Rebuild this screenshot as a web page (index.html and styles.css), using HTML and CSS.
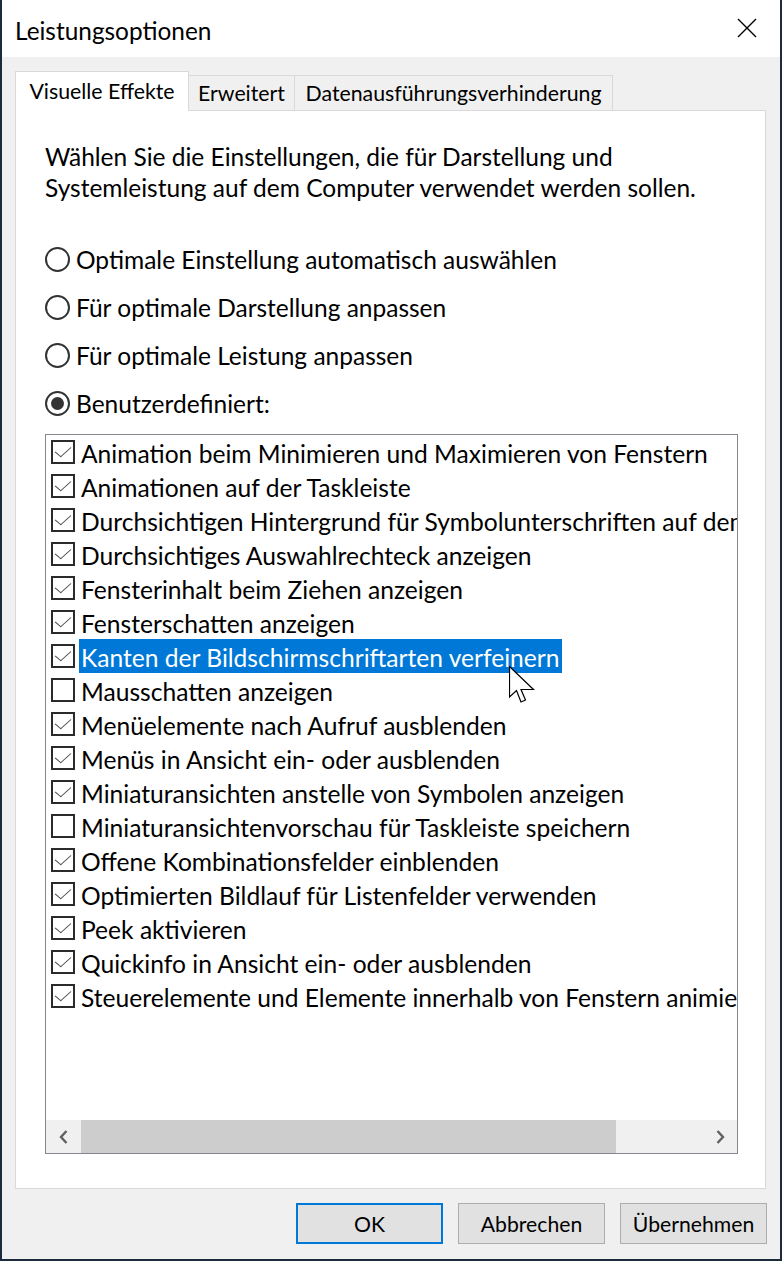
FILE: index.html
```html
<!DOCTYPE html>
<html lang="de">
<head>
  <meta charset="UTF-8" />
  <title>Leistungsoptionen</title>
  <link rel="stylesheet" href="styles.css">
</head>
<body>
  <div class="window">
    <div class="titlebar">
      <span class="title">Leistungsoptionen</span>
      <svg class="close" width="20" height="20" viewBox="0 0 20 20">
        <path d="M1 1L19 19M19 1L1 19" stroke="#000" stroke-width="1.4" fill="none"/>
      </svg>
    </div>

    <div class="content">
      <div class="tabs">
        <div class="tab tab-visual active">Visuelle Effekte</div>
        <div class="tab tab-advanced">Erweitert</div>
        <div class="tab tab-dep">Datenausführungsverhinderung</div>
      </div>

      <div class="panel">
        <p class="intro">Wählen Sie die Einstellungen, die für Darstellung und<br>Systemleistung auf dem Computer verwendet werden sollen.</p>

        <div class="radios">
          <div class="radio"><span class="circle"></span>Optimale Einstellung automatisch auswählen</div>
          <div class="radio"><span class="circle"></span>Für optimale Darstellung anpassen</div>
          <div class="radio"><span class="circle"></span>Für optimale Leistung anpassen</div>
          <div class="radio checked"><span class="circle"></span>Benutzerdefiniert:</div>
        </div>

        <div class="listbox">
          <div class="items">
            <div class="item"><span class="box on"></span><span class="label">Animation beim Minimieren und Maximieren von Fenstern</span></div>
            <div class="item"><span class="box on"></span><span class="label">Animationen auf der Taskleiste</span></div>
            <div class="item"><span class="box on"></span><span class="label">Durchsichtigen Hintergrund für Symbolunterschriften auf dem Desktop</span></div>
            <div class="item"><span class="box on"></span><span class="label">Durchsichtiges Auswahlrechteck anzeigen</span></div>
            <div class="item"><span class="box on"></span><span class="label">Fensterinhalt beim Ziehen anzeigen</span></div>
            <div class="item"><span class="box on"></span><span class="label">Fensterschatten anzeigen</span></div>
            <div class="item selected"><span class="box on"></span><span class="label">Kanten der Bildschirmschriftarten verfeinern</span></div>
            <div class="item"><span class="box"></span><span class="label">Mausschatten anzeigen</span></div>
            <div class="item"><span class="box on"></span><span class="label">Menüelemente nach Aufruf ausblenden</span></div>
            <div class="item"><span class="box on"></span><span class="label">Menüs in Ansicht ein- oder ausblenden</span></div>
            <div class="item"><span class="box on"></span><span class="label">Miniaturansichten anstelle von Symbolen anzeigen</span></div>
            <div class="item"><span class="box"></span><span class="label">Miniaturansichtenvorschau für Taskleiste speichern</span></div>
            <div class="item"><span class="box on"></span><span class="label">Offene Kombinationsfelder einblenden</span></div>
            <div class="item"><span class="box on"></span><span class="label">Optimierten Bildlauf für Listenfelder verwenden</span></div>
            <div class="item"><span class="box on"></span><span class="label">Peek aktivieren</span></div>
            <div class="item"><span class="box on"></span><span class="label">Quickinfo in Ansicht ein- oder ausblenden</span></div>
            <div class="item"><span class="box on"></span><span class="label">Steuerelemente und Elemente innerhalb von Fenstern animieren</span></div>
          </div>

          <div class="hscroll">
            <span class="arrow">
              <svg width="12" height="16" viewBox="0 0 12 16"><path d="M8.5 2L3 8l5.5 6" stroke="#606060" stroke-width="2.4" fill="none"/></svg>
            </span>
            <span class="track"><span class="thumb"></span></span>
            <span class="arrow">
              <svg width="12" height="16" viewBox="0 0 12 16"><path d="M3.5 2L9 8l-5.5 6" stroke="#606060" stroke-width="2.4" fill="none"/></svg>
            </span>
          </div>
        </div>
      </div>

      <div class="buttons">
        <button class="btn default">OK</button>
        <button class="btn">Abbrechen</button>
        <button class="btn">Übernehmen</button>
      </div>
    </div>

    <!-- Mauszeiger über dem markierten Eintrag -->
    <svg class="cursor" width="26" height="38" viewBox="0 0 26 38">
      <path d="M0.5 0.5L0.5 31L7.5 24.5L12 36L16.5 34L12 23.5L24.5 23.5Z" fill="#fff" stroke="#000" stroke-width="1.2" stroke-linejoin="miter"/>
    </svg>
  </div>
</body>
</html>
```

FILE: styles.css
```css
* {
  box-sizing: border-box;
}

body {
  margin: 0;
  background: #1c2b3c;
  font-family: "Segoe UI", "Lato", "Noto Sans", sans-serif;
  color: #000;
}

.window {
  position: relative;
  margin-left: 2px;
  width: 778px;
  height: 1259px;
  background: #f0f0f0;
  display: flex;
  flex-direction: column;
}

/* Titelleiste */
.titlebar {
  height: 57px;
  background: #fff;
  display: flex;
  align-items: center;
  justify-content: space-between;
  padding: 4px 23px 0 13px;
}

.title {
  font-size: 24.4px;
}

.close {
  margin-top: -6px;
}

.content {
  flex: 1;
  display: flex;
  flex-direction: column;
  padding: 14px 14px 0 13px;
}

/* Reiter */
.tabs {
  display: flex;
  align-items: flex-end;
  height: 40px;
  margin-bottom: -1px;
  position: relative;
  z-index: 1;
}

.tab {
  height: 35px;
  margin-bottom: 1px;
  display: flex;
  align-items: center;
  justify-content: center;
  background: #f0f0f0;
  border: 1px solid #d9d9d9;
  border-bottom: none;
  font-size: 21.3px;
}

.tab + .tab {
  border-left: none;
}

.tab.active {
  height: 40px;
  margin-bottom: 0;
  background: #fff;
  padding-bottom: 1px;
}

.tab-visual { width: 174px; }
.tab-advanced { width: 106px; }
.tab-dep { width: 318px; }

.panel {
  height: 1079px;
  background: #fff;
  border: 1px solid #d9d9d9;
  padding: 30px 0 0 29px;
}

.intro {
  margin: 0;
  font-size: 24.5px;
  line-height: 31px;
}

.radios {
  margin-top: 32px;
}

.radio {
  height: 48px;
  display: flex;
  align-items: center;
  font-size: 24.5px;
}

.circle {
  width: 25px;
  height: 25px;
  border: 2px solid #333;
  border-radius: 50%;
  margin-right: 6px;
  display: flex;
  align-items: center;
  justify-content: center;
  flex-shrink: 0;
}

.radio.checked .circle::after {
  content: "";
  width: 13px;
  height: 13px;
  border-radius: 50%;
  background: #333;
}

/* Liste mit Kontrollkästchen */
.listbox {
  margin-top: 7px;
  width: 693px;
  height: 720px;
  border: 1px solid #828790;
  background: #fff;
  display: flex;
  flex-direction: column;
}

.items {
  flex: 1;
  overflow: hidden;
  white-space: nowrap;
}

.item {
  height: 34px;
  display: flex;
  align-items: center;
  padding-left: 5px;
  font-size: 24.6px;
}

.box {
  width: 24px;
  height: 24px;
  border: 2px solid #2b2b2b;
  margin-right: 4px;
  flex-shrink: 0;
  position: relative;
}

.box.on::after {
  content: "";
  position: absolute;
  left: 6px;
  top: 1px;
  width: 7px;
  height: 13px;
  border-right: 1.7px solid #4a4a4a;
  border-bottom: 1.7px solid #4a4a4a;
  transform: rotate(40deg) skewX(-8deg);
}

.label {
  padding: 3px 2px 0;
  height: 34px;
  line-height: 31px;
}

.item.selected .label {
  background: #0078d7;
  color: #fff;
}

.hscroll {
  height: 33px;
  display: flex;
  background: #f0f0f0;
}

.arrow {
  width: 35px;
  display: flex;
  align-items: center;
  justify-content: center;
}

.track {
  flex: 1;
}

.thumb {
  display: block;
  width: 535px;
  height: 100%;
  background: #cdcdcd;
}

/* Schaltflächen */
.buttons {
  display: flex;
  justify-content: flex-end;
  gap: 15px;
  margin-top: 14px;
  margin-right: -1px;
}

.btn {
  width: 147px;
  height: 41px;
  background: #e1e1e1;
  border: 1px solid #adadad;
  font-family: inherit;
  font-size: 21.2px;
  color: #000;
  padding: 0;
}

.btn.default {
  border: 2px solid #0078d7;
}

.cursor {
  position: absolute;
  left: 507px;
  top: 666px;
}
```
